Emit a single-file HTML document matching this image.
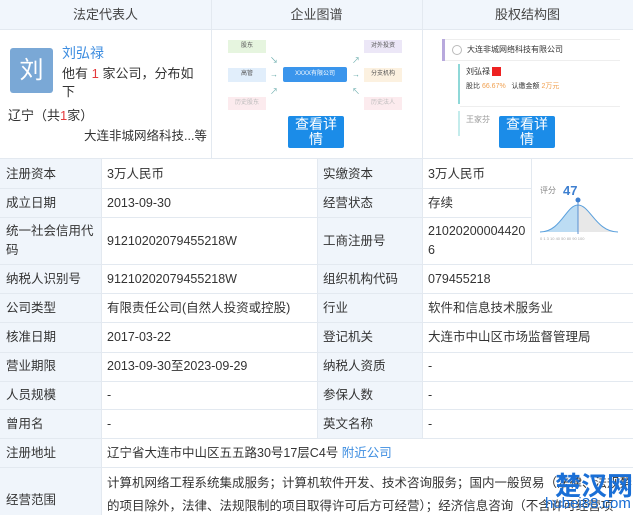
<!DOCTYPE html>
<html><head><meta charset="utf-8"><style>
*{margin:0;padding:0;box-sizing:border-box}
body{width:633px;height:515px;overflow:hidden;background:#fff;font-family:"Liberation Sans","Noto Sans CJK SC",sans-serif;font-size:12.5px;color:#333;position:relative}
.a{position:absolute}
.hd{top:0;height:30px;background:#f1f6fc;border-bottom:1px solid #e3e9f0;text-align:center;line-height:30px;font-size:13px;color:#444}
.vl{width:1px;background:#e3e9f0}
.hl{height:1px;background:#e3e9f0;left:0;width:633px}
.lb{background:#f0f5fb}
.t{position:absolute;white-space:nowrap;line-height:16px}
.btn{background:#1b8ce8;color:#fff;text-align:center;font-size:14px;line-height:15px;padding-top:1px;border-radius:2px}
.bx{font-size:6px;text-align:center;line-height:13px;color:#555}
</style></head><body>
<div class="a hd" style="left:0;width:211px">法定代表人</div>
<div class="a hd" style="left:211px;width:211px">企业图谱</div>
<div class="a hd" style="left:422px;width:211px">股权结构图</div>
<div class="a vl" style="left:211px;top:0;height:158px"></div>
<div class="a vl" style="left:422px;top:0;height:158px"></div>

<div class="a" style="left:10px;top:48px;width:43px;height:45px;background:#7aa8d6;border-radius:3px;color:#fff;font-size:24px;text-align:center;line-height:45px">刘</div>
<div class="t" style="left:62px;top:45px;color:#3d8de0;font-size:14px">刘弘禄</div>
<div class="t" style="left:62px;top:66px;font-size:13px">他有 <span style="color:#e4393c">1</span> 家公司，分布如</div>
<div class="t" style="left:62px;top:84px;font-size:13px">下</div>
<div class="t" style="left:8px;top:108px;font-size:13px">辽宁（共<span style="color:#e4393c">1</span>家）</div>
<div class="t" style="left:84px;top:128px;font-size:12.5px">大连非城网络科技...等</div>

<div class="a bx" style="left:228px;top:40px;width:38px;height:13px;background:#e6f5df">股东</div>
<div class="a bx" style="left:228px;top:68px;width:38px;height:14px;background:#e1eefb">高管</div>
<div class="a bx" style="left:228px;top:97px;width:38px;height:13px;background:#fcebee;color:#bbb">历史股东</div>
<div class="a bx" style="left:283px;top:67px;width:64px;height:15px;background:#3a95ec;color:#fff;border-radius:2px;line-height:15px">XXXX有限公司</div>
<div class="a bx" style="left:364px;top:40px;width:38px;height:13px;background:#ece7f7">对外投资</div>
<div class="a bx" style="left:364px;top:68px;width:38px;height:14px;background:#fcf1e0">分支机构</div>
<div class="a bx" style="left:364px;top:97px;width:38px;height:13px;background:#fcebee;color:#bbb">历史法人</div>
<div class="t" style="left:270px;top:53px;color:#6aa;font-size:8px">↘</div>
<div class="t" style="left:270px;top:67px;color:#6aa;font-size:8px">→</div>
<div class="t" style="left:270px;top:84px;color:#6aa;font-size:8px">↗</div>
<div class="t" style="left:352px;top:53px;color:#6aa;font-size:8px">↗</div>
<div class="t" style="left:352px;top:67px;color:#6aa;font-size:8px">→</div>
<div class="t" style="left:352px;top:84px;color:#6aa;font-size:8px">↖</div>
<div class="a btn" style="left:288px;top:116px;width:56px;height:32px">查看详<br>情</div>

<div class="a" style="left:442px;top:39px;width:3px;height:22px;background:#b8a9dd"></div>
<div class="a" style="left:445px;top:39px;width:175px;height:1px;background:#eee"></div>
<div class="a" style="left:445px;top:60px;width:175px;height:1px;background:#eee"></div>
<div class="a" style="left:452px;top:45px;width:10px;height:10px;border:1px solid #bbb;border-radius:50%"></div>
<div class="t" style="left:467px;top:42px;font-size:8px">大连非城网络科技有限公司</div>
<div class="a" style="left:458px;top:64px;width:2px;height:40px;background:#8fd8d8"></div>
<div class="a" style="left:458px;top:111px;width:2px;height:25px;background:#c4ecec"></div>
<div class="a" style="left:460px;top:106px;width:160px;height:1px;background:#eee"></div>
<div class="t" style="left:466px;top:64px;font-size:8px">刘弘禄 <span style="display:inline-block;width:9px;height:9px;background:#e22;vertical-align:middle"></span></div>
<div class="t" style="left:466px;top:79px;font-size:7px">股比 <span style="color:#f0a050">66.67%</span>&nbsp;&nbsp; 认缴金额 <span style="color:#f0a050">2万元</span></div>
<div class="t" style="left:466px;top:112px;font-size:8px;color:#999">王家芬</div>
<div class="a btn" style="left:499px;top:116px;width:56px;height:32px">查看详<br>情</div>

<div class="a hl" style="top:158px"></div>
<div class="a lb" style="left:0;top:159px;width:101px;height:356px"></div>
<div class="a lb" style="left:317px;top:159px;width:105px;height:279px"></div>
<div class="a vl" style="left:101px;top:158px;height:357px"></div>
<div class="a vl" style="left:317px;top:158px;height:280px"></div>
<div class="a vl" style="left:422px;top:158px;height:280px"></div>
<div class="a vl" style="left:531px;top:158px;height:106px"></div>
<div class="a hl" style="top:188px;width:531px"></div>
<div class="a hl" style="top:217px;width:531px"></div>
<div class="a hl" style="top:264px"></div>
<div class="a hl" style="top:293px"></div>
<div class="a hl" style="top:322px"></div>
<div class="a hl" style="top:352px"></div>
<div class="a hl" style="top:381px"></div>
<div class="a hl" style="top:409px"></div>
<div class="a hl" style="top:438px"></div>
<div class="a hl" style="top:467px"></div>

<div class="t" style="left:6px;top:166px">注册资本</div><div class="t" style="left:107px;top:166px">3万人民币</div><div class="t" style="left:323px;top:166px">实缴资本</div><div class="t" style="left:428px;top:166px">3万人民币</div>
<div class="t" style="left:6px;top:195px">成立日期</div><div class="t" style="left:107px;top:195px">2013-09-30</div><div class="t" style="left:323px;top:195px">经营状态</div><div class="t" style="left:428px;top:195px">存续</div>
<div class="t" style="left:6px;top:222px;line-height:19px">统一社会信用代<br>码</div><div class="t" style="left:107px;top:233px">91210202079455218W</div><div class="t" style="left:323px;top:233px">工商注册号</div><div class="t" style="left:428px;top:222px;line-height:19px">21020200004420<br>6</div>
<div class="t" style="left:6px;top:271px">纳税人识别号</div><div class="t" style="left:107px;top:271px">91210202079455218W</div><div class="t" style="left:323px;top:271px">组织机构代码</div><div class="t" style="left:428px;top:271px">079455218</div>
<div class="t" style="left:6px;top:300px">公司类型</div><div class="t" style="left:107px;top:300px">有限责任公司(自然人投资或控股)</div><div class="t" style="left:323px;top:300px">行业</div><div class="t" style="left:428px;top:300px">软件和信息技术服务业</div>
<div class="t" style="left:6px;top:329px">核准日期</div><div class="t" style="left:107px;top:329px">2017-03-22</div><div class="t" style="left:323px;top:329px">登记机关</div><div class="t" style="left:428px;top:329px">大连市中山区市场监督管理局</div>
<div class="t" style="left:6px;top:358px">营业期限</div><div class="t" style="left:107px;top:358px">2013-09-30至2023-09-29</div><div class="t" style="left:323px;top:358px">纳税人资质</div><div class="t" style="left:428px;top:358px">-</div>
<div class="t" style="left:6px;top:387px">人员规模</div><div class="t" style="left:107px;top:387px">-</div><div class="t" style="left:323px;top:387px">参保人数</div><div class="t" style="left:428px;top:387px">-</div>
<div class="t" style="left:6px;top:416px">曾用名</div><div class="t" style="left:107px;top:416px">-</div><div class="t" style="left:323px;top:416px">英文名称</div><div class="t" style="left:428px;top:416px">-</div>
<div class="t" style="left:6px;top:445px">注册地址</div><div class="t" style="left:107px;top:445px">辽宁省大连市中山区五五路30号17层C4号 <span style="color:#3d8de0">附近公司</span></div>
<div class="t" style="left:6px;top:492px">经营范围</div>
<div class="t" style="left:107px;top:472px;line-height:23px">计算机网络工程系统集成服务；计算机软件开发、技术咨询服务；国内一般贸易（法律、法规禁<br>的项目除外，法律、法规限制的项目取得许可后方可经营）；经济信息咨询（不含许可经营项</div>

<svg class="a" style="left:536px;top:182px" width="90" height="60">
<text x="4" y="11" font-size="8" fill="#888" font-family="Liberation Sans,Noto Sans CJK SC,sans-serif">评分</text>
<text x="27" y="13" font-size="13" font-weight="bold" fill="#3d7fd0" font-family="Liberation Sans,sans-serif">47</text>
<path d="M4 50 C25 50 30 23 42 23 L42 50Z" fill="#bcdcf3"/>
<path d="M42 23 C54 23 60 50 82 50 L42 50Z" fill="#e8e8e8"/>
<path d="M4 50 C25 50 30 23 42 23 C54 23 60 50 82 50" fill="none" stroke="#5aa0dd" stroke-width="1"/>
<line x1="42" y1="18" x2="42" y2="52" stroke="#5a8fd0"/>
<circle cx="42" cy="18" r="2.5" fill="#3d7fd0"/>
<text x="4" y="58" font-size="4" fill="#aaa">0 1 3 10 40 50 80 90 100</text>
</svg>
<div class="t" style="left:555px;top:472px;font-size:26px;line-height:28px;font-weight:bold;color:#1a6fd6">楚汉网</div>
<div class="t" style="left:545px;top:496px;font-size:15px;color:#1a6fd6">hubei88.com</div>
</body></html>
